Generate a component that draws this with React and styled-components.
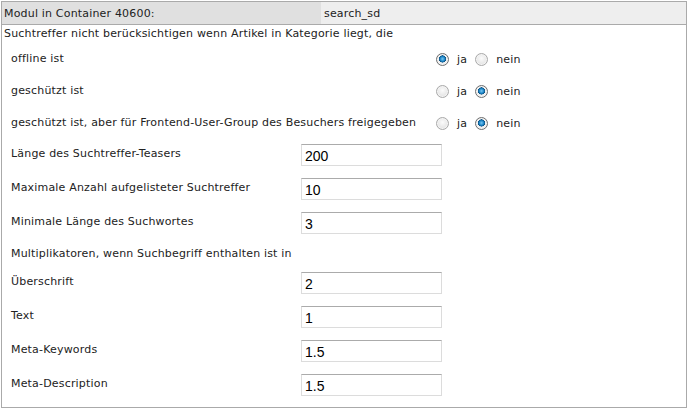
import React from 'react';
import styled, { createGlobalStyle } from 'styled-components';

const GlobalStyle = createGlobalStyle`
  html, body {
    margin: 0;
    padding: 0;
    background: #ffffff;
  }
  body {
    font-family: "DejaVu Sans", Verdana, sans-serif;
    font-size: 11px;
    letter-spacing: 0.18px;
    color: #222222;
  }
`;

const Panel = styled.div`
  margin: 1px 0 0 1px;
  width: 684px;
  border: 1px solid #aaaaaa;
  padding-bottom: 5px;
`;

const Header = styled.div`
  display: grid;
  grid-template-columns: 319px 1fr;
  height: 22px;
  border-bottom: 1px solid #aaaaaa;
`;

const HeaderCell = styled.div`
  display: flex;
  align-items: center;
  padding-left: ${props => (props.$second ? '3px' : '2px')};
  background: ${props => (props.$second ? '#eeeeee' : '#e0e0e0')};
`;

const Intro = styled.div`
  padding: 2px 0 2px 2px;
  line-height: 13px;
`;

const RadioRow = styled.div`
  display: grid;
  grid-template-columns: 425px 1fr;
  align-items: center;
  height: 32px;
  padding-left: 9px;
`;

const Label = styled.div`
  line-height: 13px;
  white-space: nowrap;
  padding-top: ${props => (props.$top ? '3px' : '0')};
`;

const Options = styled.div`
  display: flex;
  align-items: center;
  padding-top: 2px;
`;

const Radio = styled.input.attrs({ type: 'radio' })`
  appearance: none;
  -webkit-appearance: none;
  width: 13px;
  height: 13px;
  margin: 0 8px 0 0;
  border-radius: 50%;
  border: 1px solid #a9a9a9;
  background: radial-gradient(circle at 50% 40%, #fbfbfb 0%, #e4e4e4 70%, #d4d4d4 100%);
  box-shadow: inset 0 0 0 1px #f4f4f4;
  flex-shrink: 0;

  &:checked {
    border-color: #6f6f6f;
    background:
      radial-gradient(circle at 50% 45%, #7cc8f2 0%, #1c86c8 28%, #0a4f80 42%, transparent 46%),
      radial-gradient(circle, #ffffff 0%, #eeeeee 55%, #c4c4c4 100%);
  }
`;

const OptionText = styled.span`
  margin-right: ${props => (props.$gap ? '8px' : '0')};
`;

const FieldRow = styled.div`
  display: grid;
  grid-template-columns: 290px 141px;
  align-items: start;
  padding: 6px 0 6px 9px;
`;

const NoteRow = styled.div`
  height: 26px;
  display: flex;
  align-items: center;
  padding-left: 9px;
  line-height: 13px;
`;

const TextInput = styled.input.attrs({ type: 'text' })`
  box-sizing: border-box;
  width: 141px;
  height: 22px;
  margin: 0;
  padding: 1px 3px 0;
  border: 1px solid #dcdcdc;
  border-top-color: #ababab;
  font-family: "Liberation Sans", Arial, sans-serif;
  font-size: 14px;
  letter-spacing: 0;
  color: #000000;
  background: #ffffff;
  outline: none;
`;

const radios = [
  { label: 'offline ist', value: 'ja' },
  { label: 'geschützt ist', value: 'nein' },
  { label: 'geschützt ist, aber für Frontend-User-Group des Besuchers freigegeben', value: 'nein' },
];

const general = [
  { label: 'Länge des Suchtreffer-Teasers', value: '200' },
  { label: 'Maximale Anzahl aufgelisteter Suchtreffer', value: '10' },
  { label: 'Minimale Länge des Suchwortes', value: '3' },
];

const multipliers = [
  { label: 'Überschrift', value: '2' },
  { label: 'Text', value: '1' },
  { label: 'Meta-Keywords', value: '1.5' },
  { label: 'Meta-Description', value: '1.5' },
];

const Field = ({ label, value }) => (
  <FieldRow>
    <Label $top>{label}</Label>
    <TextInput defaultValue={value} />
  </FieldRow>
);

export default function App() {
  return (
    <>
      <GlobalStyle />
      <Panel>
        <Header>
          <HeaderCell>Modul in Container 40600:</HeaderCell>
          <HeaderCell $second>search_sd</HeaderCell>
        </Header>
        <Intro>Suchtreffer nicht berücksichtigen wenn Artikel in Kategorie liegt, die</Intro>
        {radios.map((r, i) => (
          <RadioRow key={r.label}>
            <Label>{r.label}</Label>
            <Options>
              <Radio name={`opt${i}`} defaultChecked={r.value === 'ja'} />
              <OptionText $gap>ja</OptionText>
              <Radio name={`opt${i}`} defaultChecked={r.value === 'nein'} />
              <OptionText>nein</OptionText>
            </Options>
          </RadioRow>
        ))}
        {general.map(f => (
          <Field key={f.label} {...f} />
        ))}
        <NoteRow>Multiplikatoren, wenn Suchbegriff enthalten ist in</NoteRow>
        {multipliers.map(f => (
          <Field key={f.label} {...f} />
        ))}
      </Panel>
    </>
  );
}
